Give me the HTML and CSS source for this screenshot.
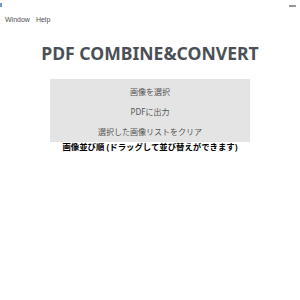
FILE: index.html
```html
<!DOCTYPE html>
<html lang="ja">
<head>
    <meta charset="UTF-8">
    <meta name="viewport" content="width=device-width, initial-scale=1.0">
    <title>PDF COMBINE&amp;CONVERT</title>
    <link rel="stylesheet" href="styles.css">
</head>
<body>
    <div class="titlebar">
        <span class="app-icon"></span>
        <span class="minimize"></span>
    </div>
    <div class="menu">
        <span>Window</span>
        <span>Help</span>
    </div>
    <div class="container">
        <p class="title">PDF COMBINE&amp;CONVERT</p>
        <div class="buttons">
            <button class="btn">画像を選択</button>
            <button class="btn">PDFに出力</button>
            <button class="btn">選択した画像リストをクリア</button>
        </div>
        <p class="order">画像並び順 (ドラッグして並び替えができます)</p>
    </div>
</body>
</html>
```

FILE: styles.css
```css
body {
    margin: 0;
    background-color: white;
    font-family: "Noto Sans", "Noto Sans CJK JP", sans-serif;
}

.titlebar {
    height: 12px;
    position: relative;
}

.app-icon {
    position: absolute;
    left: 0;
    top: 3px;
    width: 2px;
    height: 4px;
    background-color: rgb(110, 150, 220);
}

.minimize {
    position: absolute;
    right: 4px;
    top: 5px;
    width: 7px;
    height: 2px;
    background-color: rgb(150, 150, 150);
}

.menu {
    display: flex;
    gap: 6px;
    padding-left: 5px;
    font-family: "Liberation Sans", sans-serif;
    font-size: 7px;
    color: rgb(80, 80, 80);
    height: 16px;
    line-height: 15px;
}

.container {
    display: flex;
    flex-direction: column;
    align-items: center;
}

.title {
    margin: 13px 0 0 0;
    font-size: 17.6px;
    font-weight: bold;
    color: rgb(75, 80, 86);
    line-height: 24px;
}

.buttons {
    margin-top: 14px;
    width: 200px;
    background-color: rgb(228, 228, 228);
    display: flex;
    flex-direction: column;
    padding: 2px 0 1px 0;
}

.btn {
    background: none;
    border: none;
    height: 20px;
    padding: 0;
    font-family: "Noto Sans", "Noto Sans CJK JP", sans-serif;
    font-size: 8px;
    color: rgb(85, 85, 85);
}

.order {
    margin: 0;
    font-size: 8.4px;
    font-weight: bold;
    color: black;
    line-height: 10px;
}
```
